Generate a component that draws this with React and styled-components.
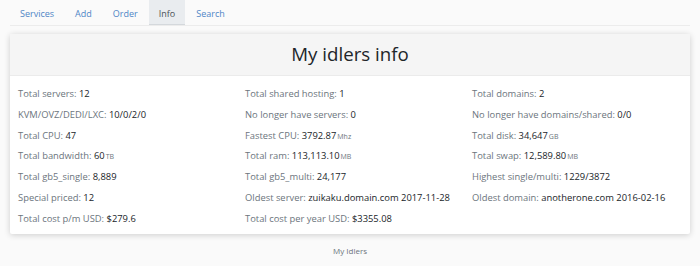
import React from "react";
import styled, { createGlobalStyle } from "styled-components";

const Global = createGlobalStyle`
  html, body { margin: 0; padding: 0; background: #fafafa; }
  body { font-family: "Open Sans", "Noto Sans", sans-serif; color: #212529; }
`;

const Page = styled.div`
  width: 700px;
  height: 266px;
  display: flex;
  flex-direction: column;
  padding: 0 10px;
  box-sizing: border-box;
`;

const Nav = styled.nav`
  display: flex;
  height: 25px;
  border-bottom: 1px solid #ececec;
`;

const Tab = styled.a`
  display: flex;
  align-items: center;
  padding: 1px 10px 0;
  font-size: 9px;
  color: ${(p) => (p.$active ? "#495057" : "#4f86c6")};
  background: ${(p) => (p.$active ? "#e9ecef" : "transparent")};
  box-shadow: ${(p) => (p.$active ? "inset 0 -1px 0 #d4d8dc" : "none")};
  text-decoration: none;
  & + & { margin-left: 1px; }
`;

const Card = styled.section`
  margin-top: 8px;
  background: #fff;
  box-shadow: 0 1px 6px rgba(0, 0, 0, 0.18);
  border-radius: 2px;
  height: 200px;
  display: flex;
  flex-direction: column;
`;

const CardHeader = styled.header`
  background: #f5f5f5;
  height: 41px;
  border-bottom: 1px solid #ebebeb;
  display: flex;
  align-items: center;
  justify-content: center;
`;

const Title = styled.h1`
  margin: 0;
  font-weight: 400;
  font-size: 18.7px;
  color: #212529;
  transform: translateY(-1px);
`;

const Grid = styled.div`
  display: grid;
  grid-template-columns: 227px 227px 1fr;
  grid-auto-rows: 20.8px;
  padding: 8px 8px 0 8px;
`;

const Item = styled.p`
  margin: 0;
  font-size: 9.4px;
  line-height: 20.8px;
  color: #6c757d;
  white-space: nowrap;
`;

const Value = styled.span`
  color: #212529;
`;

const Unit = styled.small`
  font-size: 7px;
  color: #6c757d;
  margin-left: 1px;
`;

const Footer = styled.footer`
  text-align: center;
  font-size: 8px;
  color: #6c757d;
  margin-top: 11px;
`;

const rows = [
  [["Total servers", "12"], ["Total shared hosting", "1"], ["Total domains", "2"]],
  [["KVM/OVZ/DEDI/LXC", "10/0/2/0"], ["No longer have servers", "0"], ["No longer have domains/shared", "0/0"]],
  [["Total CPU", "47"], ["Fastest CPU", "3792.87", "Mhz"], ["Total disk", "34,647", "GB"]],
  [["Total bandwidth", "60", "TB"], ["Total ram", "113,113.10", "MB"], ["Total swap", "12,589.80", "MB"]],
  [["Total gb5_single", "8,889"], ["Total gb5_multi", "24,177"], ["Highest single/multi", "1229/3872"]],
  [["Special priced", "12"], ["Oldest server", "zuikaku.domain.com 2017-11-28"], ["Oldest domain", "anotherone.com 2016-02-16"]],
  [["Total cost p/m USD", "$279.6"], ["Total cost per year USD", "$3355.08"], null],
];

export default function App() {
  return (
    <>
      <Global />
      <Page>
        <Nav>
          <Tab href="#">Services</Tab>
          <Tab href="#">Add</Tab>
          <Tab href="#">Order</Tab>
          <Tab href="#" $active>Info</Tab>
          <Tab href="#">Search</Tab>
        </Nav>
        <Card>
          <CardHeader>
            <Title>My idlers info</Title>
          </CardHeader>
          <Grid>
            {rows.flat().map((c, i) =>
              c ? (
                <Item key={i}>
                  {c[0]}: <Value>{c[1]}</Value>
                  {c[2] && <Unit>{c[2]}</Unit>}
                </Item>
              ) : (
                <span key={i} />
              )
            )}
          </Grid>
        </Card>
        <Footer>My Idlers</Footer>
      </Page>
    </>
  );
}
